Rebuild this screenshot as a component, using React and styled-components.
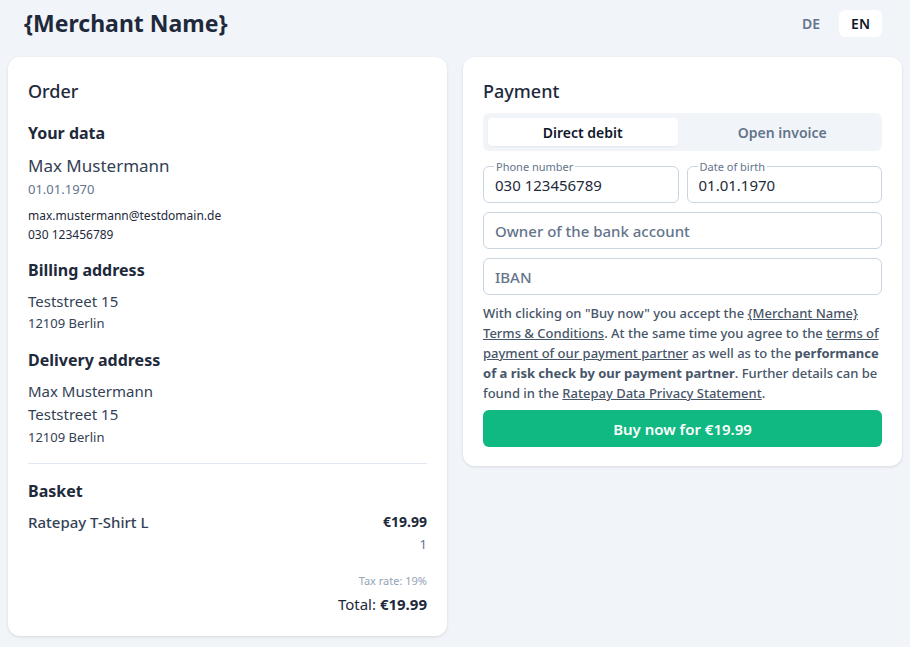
import React, { useState } from 'react'
import styled, { createGlobalStyle } from 'styled-components'

const GlobalStyle = createGlobalStyle`
    * { box-sizing: border-box; }
    body {
        margin: 0;
        background: #f1f5f9;
        font-family: "Noto Sans", "Open Sans", sans-serif;
        color: #1e293b;
    }
`

const Page = styled.div`
    padding: 0 8px 12px;
`

const Header = styled.header`
    display: flex;
    align-items: center;
    justify-content: space-between;
    height: 46px;
    padding: 0 20px 0 16px;
    h1 {
        margin: 0;
        font-size: 23px;
        font-weight: 700;
        color: #1e293b;
    }
`

const LangSwitch = styled.div`
    display: flex;
    gap: 7px;
`

const LangButton = styled.button`
    border: none;
    height: 27px;
    font-family: inherit;
    font-size: 14px;
    font-weight: 600;
    padding: 0 12px;
    border-radius: 6px;
    cursor: pointer;
    background: ${p => (p.$active ? '#fff' : 'transparent')};
    color: ${p => (p.$active ? '#0f172a' : '#64748b')};
`

const Columns = styled.main`
    display: grid;
    grid-template-columns: 1fr 1fr;
    gap: 16px;
    align-items: start;
    margin-top: 11px;
`

const Card = styled.section`
    background: #fff;
    border-radius: 12px;
    padding: 20px 20px 19px;
    box-shadow: 0 1px 3px rgba(15, 23, 42, 0.12);
    h2 {
        margin: 0 0 8px;
        font-size: 18px;
        line-height: 28px;
        font-weight: 500;
        color: #1e293b;
    }
`

const OrderCard = styled(Card)`
    padding-bottom: 20px;
    h2 {
        margin-bottom: 16px;
    }
`

const Section = styled.div`
    margin-top: ${p => p.$top || 0}px;
    h3 {
        margin: 0 0 8px;
        font-size: 16px;
        line-height: 24px;
        font-weight: 700;
        color: #1e293b;
    }
`

const Line = styled.div`
    font-size: ${p => p.$size || 14}px;
    line-height: ${p => p.$lh || 22}px;
    color: ${p => p.$color || '#334155'};
    font-weight: ${p => p.$weight || 400};
    margin-top: ${p => p.$top || 0}px;
    text-align: ${p => p.$align || 'left'};
`

const Divider = styled.hr`
    border: none;
    border-top: 1px solid #e2e8f0;
    margin: 15px 0 15px;
`

const ItemRow = styled.div`
    display: flex;
    justify-content: space-between;
    font-size: 15px;
    line-height: 22px;
    font-weight: 500;
    color: #334155;
    margin-top: 4px;
    strong {
        font-size: 14px;
        font-weight: 700;
        color: #1e293b;
    }
`

const Totals = styled.div`
    margin-top: 15px;
    text-align: right;
`

const Tabs = styled.div`
    display: grid;
    grid-template-columns: 1fr 1fr;
    gap: 10px;
    padding: 5px;
    background: #f1f5f9;
    border-radius: 6px;
`

const Tab = styled.button`
    border: none;
    height: 28px;
    border-radius: 4px;
    font-family: inherit;
    font-size: 14px;
    font-weight: 600;
    cursor: pointer;
    background: ${p => (p.$active ? '#fff' : 'transparent')};
    color: ${p => (p.$active ? '#0f172a' : '#64748b')};
    box-shadow: ${p => (p.$active ? '0 1px 2px rgba(15,23,42,0.06)' : 'none')};
`

const Form = styled.div`
    display: flex;
    flex-direction: column;
    gap: 9px;
    margin-top: 10px;
`

const FieldRow = styled.div`
    display: grid;
    grid-template-columns: 1fr 1fr;
    gap: 8px;
`

const Fieldset = styled.fieldset`
    margin: 0;
    padding: 0 11px 6px;
    height: 42px;
    min-width: 0;
    border: 1px solid #cbd5e1;
    border-radius: 6px;
    legend {
        padding: 0 2px;
        margin-left: -1px;
        font-size: 11px;
        line-height: 11px;
        color: #64748b;
    }
    input {
        display: block;
        width: 100%;
        border: none;
        outline: none;
        padding: 0;
        margin-top: 2px;
        font-family: inherit;
        font-size: 15px;
        line-height: 22px;
        color: #1e293b;
        background: transparent;
    }
`

const Input = styled.input`
    height: 37px;
    width: 100%;
    border: 1px solid #cbd5e1;
    border-radius: 6px;
    padding: 0 11px;
    font-family: inherit;
    font-size: 15px;
    outline: none;
    &::placeholder {
        color: #64748b;
        font-weight: 500;
    }
`

const Legal = styled.p`
    margin: 8px 0 0;
    font-size: 13px;
    line-height: 20px;
    color: #475569;
    font-weight: 500;
    a {
        color: #475569;
        text-decoration: underline;
    }
    b {
        font-weight: 700;
    }
`

const BuyButton = styled.button`
    display: block;
    width: 100%;
    height: 37px;
    margin-top: 7px;
    border: none;
    border-radius: 6px;
    background: #10b981;
    color: #fff;
    font-family: inherit;
    font-size: 15px;
    font-weight: 600;
    cursor: pointer;
`

function App() {
    const [lang, setLang] = useState('EN')
    const [method, setMethod] = useState('debit')

    return (
        <Page>
            <GlobalStyle />
            <Header>
                <h1>{'{Merchant Name}'}</h1>
                <LangSwitch>
                    <LangButton $active={lang === 'DE'} onClick={() => setLang('DE')}>DE</LangButton>
                    <LangButton $active={lang === 'EN'} onClick={() => setLang('EN')}>EN</LangButton>
                </LangSwitch>
            </Header>
            <Columns>
                <OrderCard>
                    <h2>Order</h2>
                    <Section>
                        <h3>Your data</h3>
                        <Line $size={17} $lh={26}>Max Mustermann</Line>
                        <Line $size={13} $lh={20} $color="#64748b">01.01.1970</Line>
                        <Line $size={12} $lh={19} $color="#1e293b" $top={7}>max.mustermann@testdomain.de</Line>
                        <Line $size={12} $lh={19} $color="#1e293b">030 123456789</Line>
                    </Section>
                    <Section $top={14}>
                        <h3>Billing address</h3>
                        <Line $size={15} $lh={22}>Teststreet 15</Line>
                        <Line $size={13} $lh={22}>12109 Berlin</Line>
                    </Section>
                    <Section $top={14}>
                        <h3>Delivery address</h3>
                        <Line $size={15} $lh={23} $top={1}>Max Mustermann</Line>
                        <Line $size={15} $lh={23}>Teststreet 15</Line>
                        <Line $size={13} $lh={22}>12109 Berlin</Line>
                    </Section>
                    <Divider />
                    <Section>
                        <h3>Basket</h3>
                        <ItemRow>
                            <span>Ratepay T-Shirt L</span>
                            <strong>€19.99</strong>
                        </ItemRow>
                        <Line $size={13} $lh={22} $color="#64748b" $align="right">1</Line>
                    </Section>
                    <Totals>
                        <Line $size={11} $lh={22} $color="#94a3b8" $align="right">Tax rate: 19%</Line>
                        <Line $size={15} $lh={24} $color="#1e293b" $align="right">
                            Total: <b>€19.99</b>
                        </Line>
                    </Totals>
                </OrderCard>
                <Card>
                    <h2>Payment</h2>
                    <Tabs>
                        <Tab $active={method === 'debit'} onClick={() => setMethod('debit')}>Direct debit</Tab>
                        <Tab $active={method === 'invoice'} onClick={() => setMethod('invoice')}>Open invoice</Tab>
                    </Tabs>
                    <Form>
                        <FieldRow>
                            <Fieldset>
                                <legend>Phone number</legend>
                                <input defaultValue="030 123456789" />
                            </Fieldset>
                            <Fieldset>
                                <legend>Date of birth</legend>
                                <input defaultValue="01.01.1970" />
                            </Fieldset>
                        </FieldRow>
                        <Input placeholder="Owner of the bank account" />
                        <Input placeholder="IBAN" />
                    </Form>
                    <Legal>
                        With clicking on "Buy now" you accept the <a href="#">{'{Merchant Name}'} Terms &amp; Conditions</a>.
                        {' '}At the same time you agree to the <a href="#">terms of payment of our payment partner</a> as
                        well as to the <b>performance of a risk check by our payment partner</b>. Further details can be
                        found in the <a href="#">Ratepay Data Privacy Statement</a>.
                    </Legal>
                    <BuyButton>Buy now for €19.99</BuyButton>
                </Card>
            </Columns>
        </Page>
    )
}

export default App
